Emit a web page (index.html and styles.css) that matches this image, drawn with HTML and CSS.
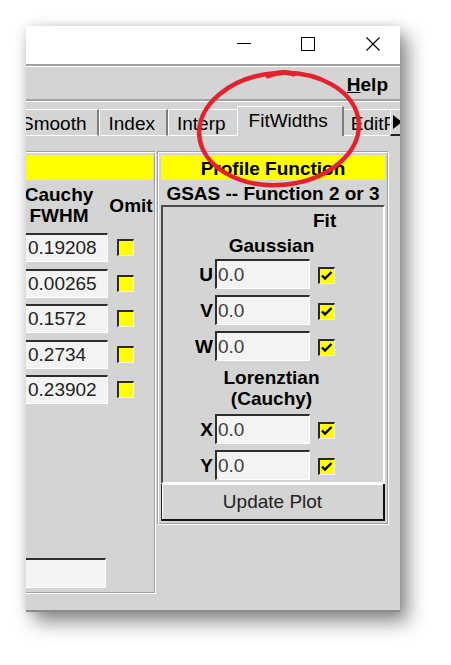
FILE: index.html
```html
<!DOCTYPE html>
<html>
<head>
<meta charset="utf-8">
<title>FitWidths</title>
<link rel="stylesheet" href="styles.css">
</head>
<body>
<div class="window">
  <div class="titlebar">
    <div class="cap"><svg class="ico" width="14" height="14" viewBox="0 0 14 14"><path d="M0 6.5H14" stroke="#000" stroke-width="1"/></svg></div>
    <div class="cap"><svg class="ico" width="14" height="14" viewBox="0 0 14 14"><rect x="0.5" y="0.5" width="13" height="13" fill="none" stroke="#000" stroke-width="1"/></svg></div>
    <div class="cap cap-close"><svg class="ico" width="14" height="14" viewBox="0 0 14 14"><path d="M0.5 0.5L13.5 13.5M13.5 0.5L0.5 13.5" stroke="#000" stroke-width="1.1"/></svg></div>
  </div>
  <div class="menubar"><span class="menu"><u>H</u>elp</span></div>
  <div class="tabrow">
    <div class="tabs">
      <div class="tab">Smooth</div>
      <div class="tab">Index</div>
      <div class="tab">Interp</div>
      <div class="tab tab-sel">FitWidths</div>
      <div class="tab">EditProfile</div>
    </div>
    <div class="tabscroll"><span class="tri"></span></div>
  </div>
  <div class="page">
    <div class="panels">
      <div class="panel panel-left groove">
        <div class="yellow"></div>
        <div class="lgrid">
          <div class="lhead">Cauchy<br>FWHM</div>
          <div class="omit">Omit</div>
          <div class="entry entry-l">0.19208</div><span class="cb cb-l"></span>
          <div class="entry entry-l">0.00265</div><span class="cb cb-l"></span>
          <div class="entry entry-l">0.1572</div><span class="cb cb-l"></span>
          <div class="entry entry-l">0.2734</div><span class="cb cb-l"></span>
          <div class="entry entry-l">0.23902</div><span class="cb cb-l"></span>
        </div>
        <div class="lbottom"><div class="entry entry-b"></div></div>
      </div>
      <div class="panel panel-right groove">
        <div class="yellow">Profile Function</div>
        <div class="sublabel">GSAS -- Function 2 or 3</div>
        <div class="inner">
          <div class="fit">Fit</div>
          <div class="sect gauss">Gaussian</div>
          <div class="prow first"><span class="plabel">U</span><div class="entry entry-r">0.0</div><span class="cb cb-r"><svg width="14" height="14" viewBox="0 0 14 14"><path d="M2 6.5L5 9.5L11.5 3" fill="none" stroke="#000" stroke-width="2.4"/></svg></span></div>
          <div class="prow"><span class="plabel">V</span><div class="entry entry-r">0.0</div><span class="cb cb-r"><svg width="14" height="14" viewBox="0 0 14 14"><path d="M2 6.5L5 9.5L11.5 3" fill="none" stroke="#000" stroke-width="2.4"/></svg></span></div>
          <div class="prow"><span class="plabel">W</span><div class="entry entry-r">0.0</div><span class="cb cb-r"><svg width="14" height="14" viewBox="0 0 14 14"><path d="M2 6.5L5 9.5L11.5 3" fill="none" stroke="#000" stroke-width="2.4"/></svg></span></div>
          <div class="sect lor">Lorenztian<br>(Cauchy)</div>
          <div class="prow after"><span class="plabel">X</span><div class="entry entry-r">0.0</div><span class="cb cb-r"><svg width="14" height="14" viewBox="0 0 14 14"><path d="M2 6.5L5 9.5L11.5 3" fill="none" stroke="#000" stroke-width="2.4"/></svg></span></div>
          <div class="prow"><span class="plabel">Y</span><div class="entry entry-r">0.0</div><span class="cb cb-r"><svg width="14" height="14" viewBox="0 0 14 14"><path d="M2 6.5L5 9.5L11.5 3" fill="none" stroke="#000" stroke-width="2.4"/></svg></span></div>
        </div>
        <div class="btn">Update Plot</div>
      </div>
    </div>
  </div>
</div>
<svg class="annot" width="451" height="665" viewBox="0 0 451 665">
  <ellipse cx="279" cy="129" rx="80" ry="56" transform="rotate(-5 279 129)" fill="none" stroke="#e3222b" stroke-width="4.5"/>
  <path d="M268 76 Q281 70 294 74" fill="none" stroke="#e3222b" stroke-width="5" stroke-linecap="round"/>
</svg>
</body>
</html>
```

FILE: styles.css
```css
html, body {
  margin: 0;
  padding: 0;
  background: #fff;
}
body {
  position: relative;
  width: 451px;
  height: 665px;
  box-sizing: border-box;
  padding: 26px 0 0 26px;
  overflow: hidden;
  font-family: "Liberation Sans", Arial, sans-serif;
  font-size: 19px;
  color: #000;
}
.window {
  width: 374px;
  height: 586px;
  background: #d4d4d4;
  overflow: hidden;
  display: flex;
  flex-direction: column;
  box-shadow: 8px 10px 18px rgba(0, 0, 0, 0.45), 0 0 10px rgba(0, 0, 0, 0.12);
}
.titlebar {
  flex: none;
  height: 38px;
  box-sizing: border-box;
  padding-bottom: 2px;
  background: #fff;
  display: flex;
  justify-content: flex-end;
  align-items: center;
}
.cap {
  width: 64px;
  display: flex;
  justify-content: center;
}
.cap-close {
  width: 60px;
  box-sizing: border-box;
  padding-left: 6px;
}
.ico { display: block; }
.menubar {
  flex: none;
  height: 33px;
  border-top: 2px solid #a0a0a0;
  border-bottom: 2px solid #a0a0a0;
  box-shadow: inset 0 1px #fff;
  display: flex;
  justify-content: flex-end;
  padding-right: 12px;
}
.menu {
  font-weight: bold;
  line-height: 21px;
  padding-top: 8px;
}
.tabrow {
  flex: none;
  height: 35px;
  display: flex;
  align-items: flex-end;
  box-shadow: inset 0 1px #fff;
}
.tabs {
  flex: 1;
  min-width: 0;
  margin-left: -14px;
  height: 35px;
  display: flex;
  align-items: flex-end;
  overflow: hidden;
}
.tab {
  flex: none;
  box-sizing: border-box;
  height: 27px;
  padding: 3px 11px 0 8px;
  line-height: 21px;
  border-top: 1px solid #fff;
  border-left: 1px solid #fff;
  border-right: 2px solid #7f7f7f;
  border-bottom: 1px solid #fff;
  white-space: nowrap;
  background: #d4d4d4;
}
.tab-sel {
  height: 30px;
  border-bottom: 0;
  padding: 3px 14px 0 11px;
  margin: 0 -2px;
  position: relative;
  z-index: 1;
}
.tabscroll {
  flex: none;
  width: 20px;
  margin-right: -10px;
  height: 27px;
  box-sizing: border-box;
  border-top: 1px solid #fff;
  border-left: 1px solid #fff;
  border-bottom: 2px solid #222;
  display: flex;
  align-items: center;
  padding-left: 2px;
}
.tri {
  width: 0;
  height: 0;
  border-left: 9px solid #000;
  border-top: 7.5px solid transparent;
  border-bottom: 7.5px solid transparent;
}
.page {
  flex: 1;
  min-height: 0;
  box-sizing: border-box;
  padding-top: 15px;
  border-bottom: 2px solid #8c8c8c;
}
.panels {
  display: flex;
  align-items: flex-start;
  gap: 1px;
  margin-left: -16px;
}
.groove {
  border: 1px solid;
  border-color: #a0a0a0 #fff #fff #a0a0a0;
  box-shadow: inset 1px 1px #fff, inset -1px -1px #a0a0a0;
}
.panel {
  flex: none;
  box-sizing: border-box;
}
.panel-left {
  width: 146px;
  padding: 3px 2px 5px;
}
.panel-right {
  width: 232px;
  padding: 3px;
}
.yellow {
  height: 25px;
  background: #ffff00;
  line-height: 27px;
  font-weight: bold;
  text-align: center;
  white-space: nowrap;
}
.lgrid {
  display: grid;
  grid-template-columns: 96px 44px;
  row-gap: 6.5px;
  align-items: center;
}
.lhead {
  font-weight: bold;
  text-align: center;
  padding-right: 4px;
  line-height: 21px;
  margin: 3.5px 0 1px;
}
.omit {
  font-weight: bold;
  text-align: center;
  line-height: 21px;
  margin-top: 4px;
}
.entry {
  box-sizing: border-box;
  height: 29px;
  background: #f3f3f3;
  border-top: 2px solid #2e2e2e;
  border-left: 2px solid #2e2e2e;
  border-right: 1px solid #fff;
  border-bottom: 1px solid #fff;
  padding-left: 2px;
  line-height: 26px;
  color: #222;
  white-space: nowrap;
  overflow: hidden;
}
.entry-l {
  justify-self: end;
  margin-right: 1px;
  width: 84px;
}
.entry-b {
  width: 93px;
  height: 30px;
}
.lbottom {
  margin-top: 154px;
}
.entry-r {
  width: 95px;
  height: 30px;
  line-height: 27px;
  padding-left: 1px;
  color: #3d3d45;
}
.cb {
  display: block;
  box-sizing: border-box;
  width: 17px;
  height: 17px;
  background: #ffff00;
  border-top: 2px solid #2a2a2a;
  border-left: 2px solid #2a2a2a;
  border-right: 1px solid #f4f4f4;
  border-bottom: 1px solid #f4f4f4;
}
.cb svg { display: block; }
.cb-l {
  margin-left: 8px;
}
.cb-r {
  margin-left: 8px;
  margin-top: 3px;
}
.sublabel {
  height: 25px;
  line-height: 27px;
  font-weight: bold;
  text-align: center;
  white-space: nowrap;
}
.inner {
  border: 2px solid;
  border-color: #4a4a4a #fff #fff #4a4a4a;
  padding: 3px 0 2px;
}
.fit {
  font-weight: bold;
  line-height: 21px;
  padding-left: 150px;
}
.sect {
  font-weight: bold;
  text-align: center;
  padding-right: 3px;
  line-height: 21px;
}
.gauss { margin-top: 4px; }
.lor { margin-top: 6px; }
.prow {
  display: flex;
  align-items: center;
  height: 30px;
  margin-top: 6px;
}
.prow.first { margin-top: 3px; }
.prow.after { margin-top: 5px; }
.plabel {
  width: 52px;
  box-sizing: border-box;
  text-align: right;
  padding-right: 2px;
  font-weight: bold;
  line-height: 21px;
}
.btn {
  height: 37px;
  box-sizing: border-box;
  border-left: 1px solid #222;
  border-right: 2px solid #111;
  border-bottom: 2px solid #111;
  box-shadow: inset 1px 1px #fff;
  text-align: center;
  line-height: 35px;
  color: #222;
}
.annot {
  position: absolute;
  left: 0;
  top: 0;
  pointer-events: none;
}
```
